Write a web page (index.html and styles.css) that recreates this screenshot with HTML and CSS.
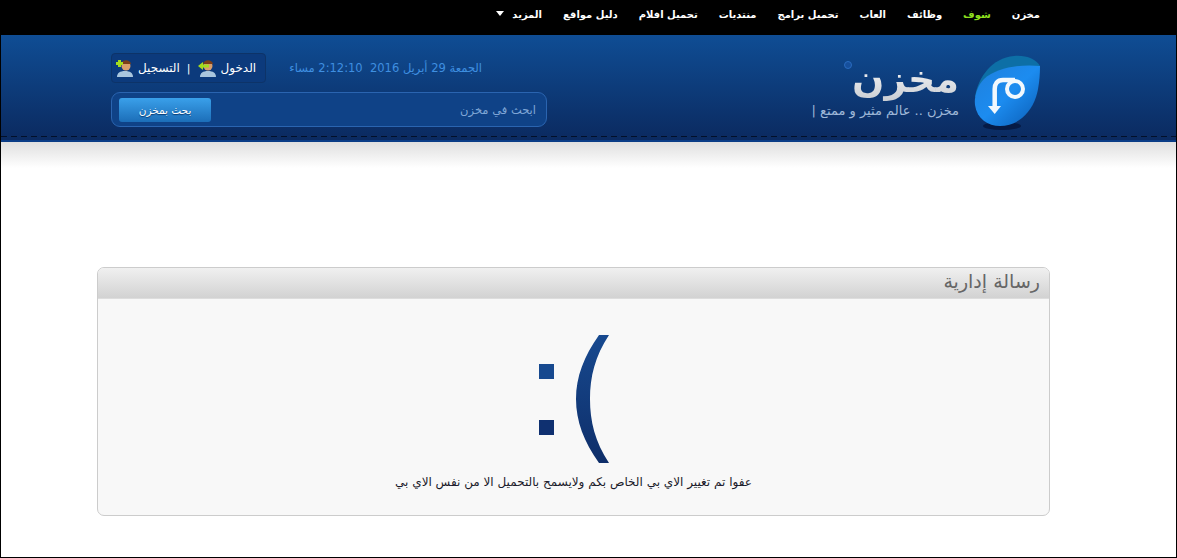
FILE: index.html
```html
<!DOCTYPE html>
<html lang="ar" dir="rtl">
  <head>
    <meta charset="UTF-8" />
    <title>مخزن</title>
    <link rel="stylesheet" href="styles.css">
  </head>
  <body>
    <nav class="topbar">
      <a href="#">مخزن</a>
      <a href="#" class="green">شوف</a>
      <a href="#">وظائف</a>
      <a href="#">العاب</a>
      <a href="#">تحميل برامج</a>
      <a href="#">منتديات</a>
      <a href="#">تحميل افلام</a>
      <a href="#">دليل مواقع</a>
      <a href="#" class="more">المزيد <span class="arrow"></span></a>
    </nav>

    <header class="header">
      <div class="header-in">
        <div class="logo">
          <svg class="logo-icon" width="68" height="76" viewBox="0 0 68 76">
            <defs>
              <linearGradient id="ball" x1="0" y1="0" x2="1" y2="1">
                <stop offset="0" stop-color="#1f7fdc" />
                <stop offset="0.5" stop-color="#1c8cf0" />
                <stop offset="1" stop-color="#0a5cb4" />
              </linearGradient>
            </defs>
            <ellipse cx="30" cy="71" rx="19" ry="4" fill="#061a45" />
            <path d="M3 42C6 22 20 3 42 1C54 0 64 4 68 11L40 30Z" fill="#0d6fa6" />
            <path d="M68 11C50 9 25 12 12 24C5 31 2 42 3 50C5 64 16 71 28 71C44 71 58 60 64 42C67 33 68 20 68 11Z" fill="url(#ball)" />
            <path d="M22.700 52V34C22.700 29 25 25 31 25H43" fill="none" stroke="#f2f8fd" stroke-width="4.500" />
            <circle cx="43" cy="34" r="8" fill="none" stroke="#f2f8fd" stroke-width="4" />
            <path d="M16 51H29L22.700 59Z" fill="#f2f8fd" />
          </svg>
          <div class="logo-text">
            <span class="logo-dot"></span>
            <div class="logo-name">مخزن</div>
            <div class="logo-slogan">مخزن .. عالم مثير و ممتع |</div>
          </div>
        </div>
        <div class="tools">
          <div class="tools-top">
            <div class="date">الجمعة 29 أبريل 2016 &nbsp;2:12:10 مساء</div>
            <div class="login">
              <a href="#">الدخول</a>
              <svg class="user" width="20" height="18" viewBox="0 0 20 18">
                <path d="M2 18C2 14 5 12 10 12C15 12 18 14 18 18Z" fill="#a9c6de" />
                <circle cx="10" cy="7" r="4.500" fill="#d99e6b" />
                <path d="M5 5C6 0 14 0 15 5Z" fill="#7a3e18" />
                <path d="M0 7L5 3V5.500H11V8.500H5V11Z" fill="#a4dc1e" />
              </svg>
              <span class="sep">|</span>
              <a href="#">التسجيل</a>
              <svg class="user" width="20" height="18" viewBox="0 0 20 18">
                <path d="M2 18C2 14 5 12 10 12C15 12 18 14 18 18Z" fill="#a9c6de" />
                <circle cx="11" cy="7" r="4.500" fill="#d99e6b" />
                <path d="M6 5C7 0 15 0 16 5Z" fill="#7a3e18" />
                <path d="M3 1H6V3H8V6H6V8H3V6H1V3H3Z" fill="#a4dc1e" />
              </svg>
            </div>
          </div>
          <form class="search">
            <input type="text" class="search-input" value="ابحث في مخزن" />
            <button type="button" class="search-btn">بحث بمخزن</button>
          </form>
        </div>
      </div>
    </header>
    <div class="header-shadow"></div>

    <section class="panel">
      <h2 class="panel-title">رسالة إدارية</h2>
      <div class="panel-body">
        <svg class="sad" width="90" height="130" viewBox="0 0 90 130">
          <defs>
            <linearGradient id="sadfill" x1="0" y1="0" x2="0" y2="1">
              <stop offset="0" stop-color="#17498f" />
              <stop offset="1" stop-color="#0e2e69" />
            </linearGradient>
          </defs>
          <path d="M70 0H80C66 21 61 42 61 64C61 86 66 107 80 128H70C55 107 47 86 47 64C47 42 55 21 70 0Z" fill="url(#sadfill)" />
          <rect x="10" y="29" width="15" height="15" fill="#17498f" />
          <rect x="10" y="85" width="15" height="15" fill="#0f3070" />
        </svg>
        <p class="msg">عفوا تم تغيير الاي بي الخاص بكم ولايسمح بالتحميل الا من نفس الاي بي</p>
      </div>
    </section>
  </body>
</html>
```

FILE: styles.css
```css
body {
  margin: 0;
  background-color: #fff;
  font-family: "DejaVu Sans", sans-serif;
  font-size: 11px;
  height: 558px;
  overflow: hidden;
  box-sizing: border-box;
  border-left: 1px solid #000;
  border-right: 1px solid #000;
  border-bottom: 1px solid #000;
}

.topbar {
  height: 35px;
  background-color: #000;
  display: flex;
  gap: 21px;
  padding: 5px 136px 0 0;
  box-sizing: border-box;
}

.topbar a {
  color: #fff;
  font-weight: bold;
  font-size: 10px;
  line-height: 20px;
  text-decoration: none;
}

.topbar a.green {
  color: #8fe01e;
}

.arrow {
  display: inline-block;
  margin-right: 5px;
  vertical-align: 2px;
  border-top: 5px solid #fff;
  border-left: 4px solid transparent;
  border-right: 4px solid transparent;
}

.header {
  height: 105px;
  background: linear-gradient(#0f4d94, #0b2a60);
  border-bottom: 2px solid #0a3c86;
  position: relative;
}

.header::after {
  content: "";
  position: absolute;
  left: 0;
  right: 0;
  bottom: 3px;
  height: 1px;
  background: repeating-linear-gradient(90deg, #02102a 0, #02102a 6px, transparent 6px, transparent 10px);
}

.header-in {
  display: flex;
  justify-content: space-between;
  padding: 18px 136px 0 110px;
}

.logo {
  display: flex;
  gap: 13px;
  margin-top: 2px;
}

.logo-text {
  position: relative;
  width: 155px;
}

.logo-dot {
  position: absolute;
  left: 40px;
  top: 6px;
  width: 6px;
  height: 6px;
  border: 1px solid #2a6cc0;
  border-radius: 50%;
  background-color: #164f9c;
}

.logo-name {
  font-size: 38px;
  line-height: 45px;
  font-weight: bold;
  background: linear-gradient(#fff, #c8ccd2);
  -webkit-background-clip: text;
  background-clip: text;
  color: transparent;
  margin-top: 2px;
  width: 108px;
}

.logo-slogan {
  color: #9fb8d8;
  font-size: 13px;
  line-height: 18px;
  white-space: nowrap;
}

.tools {
  width: 436px;
}

.tools-top {
  display: flex;
  justify-content: space-between;
  align-items: center;
  padding-right: 65px;
}

.date {
  color: #3f8fe0;
  font-size: 11.500px;
}

.login {
  display: flex;
  align-items: center;
  gap: 3px;
  height: 28px;
  padding: 0 9px 0 3px;
  background-color: #0c3a7c;
  border: 1px solid #0d3368;
  border-radius: 4px;
}

.login a {
  color: #fff;
  text-decoration: none;
  font-size: 12px;
}

.sep {
  color: #fff;
  margin: 0 4px;
}

.search {
  display: flex;
  justify-content: space-between;
  align-items: center;
  height: 33px;
  margin-top: 9px;
  padding: 0 10px 0 7px;
  background-color: #0f4287;
  border: 1px solid #2a64b0;
  border-radius: 9px;
}

.search-input {
  background: none;
  border: none;
  outline: none;
  color: #7fa6d6;
  font-family: inherit;
  font-size: 11.500px;
  width: 200px;
  padding: 0;
}

.search-btn {
  width: 92px;
  height: 24px;
  border: none;
  border-radius: 3px;
  background: linear-gradient(#3aa0ea, #1c6eb8);
  color: #fff;
  font-family: inherit;
  font-size: 10.500px;
  text-shadow: 0 1px 1px #0a3a70;
  padding: 0;
}

.header-shadow {
  height: 26px;
  background: linear-gradient(#dfdfdf, #fff);
}

.panel {
  width: 951px;
  margin: 99px 126px 0 0;
  border: 1px solid #ccc;
  border-radius: 7px;
  overflow: hidden;
  background-color: #f8f8f8;
}

.panel-title {
  margin: 0;
  height: 30px;
  line-height: 26px;
  padding-right: 9px;
  font-size: 19px;
  font-weight: normal;
  color: #666;
  background: linear-gradient(#f0f0f0, #d2d2d2);
  border-bottom: 1px solid #ddd;
}

.panel-body {
  height: 216px;
  display: flex;
  flex-direction: column;
  align-items: center;
}

.sad {
  margin-top: 36px;
  direction: ltr;
}

.msg {
  margin: 10px 0 0 0;
  color: #1a1a2a;
  font-size: 12px;
}
```
